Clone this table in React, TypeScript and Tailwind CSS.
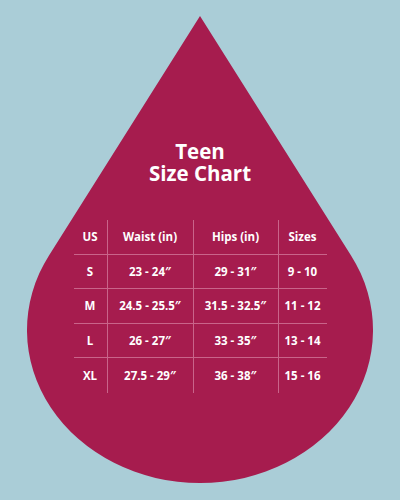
const rows = [
  ["US", "Waist (in)", "Hips (in)", "Sizes"],
  ["S", "23 - 24″", "29 - 31″", "9 - 10"],
  ["M", "24.5 - 25.5″", "31.5 - 32.5″", "11 - 12"],
  ["L", "26 - 27″", "33 - 35″", "13 - 14"],
  ["XL", "27.5 - 29″", "36 - 38″", "15 - 16"],
];

function Drop() {
  return (
    <svg className="absolute inset-0" width="400" height="500" viewBox="0 0 400 500">
      <path d="M200 16 L49 255.4 A173 153 0 1 0 351 255.4 Z" fill="#a61c4e" />
    </svg>
  );
}

export default function App() {
  return (
    <div
      className="relative w-[400px] h-[500px] overflow-hidden bg-[#aacdd7] text-white"
      style={{ fontFamily: '"Open Sans", "Liberation Sans", sans-serif' }}
    >
      <Drop />
      <div className="relative flex flex-col items-center pt-[140px]">
        <div className="text-center text-[20.5px] font-bold leading-[22px]">
          <div>Teen</div>
          <div>Size Chart</div>
        </div>
        <div className="mt-[36px] grid grid-cols-[34px_86px_85px_48px] text-[11.5px] font-bold">
          {rows.map((row, i) =>
            row.map((cell, j) => (
              <div
                key={i + "-" + j}
                className={
                  "flex items-center justify-center h-[34.5px] border-[#c9648a] " +
                  (j < 3 ? "border-r " : "") +
                  (i < 4 ? "border-b" : "")
                }
              >
                {cell}
              </div>
            ))
          )}
        </div>
      </div>
    </div>
  );
}
